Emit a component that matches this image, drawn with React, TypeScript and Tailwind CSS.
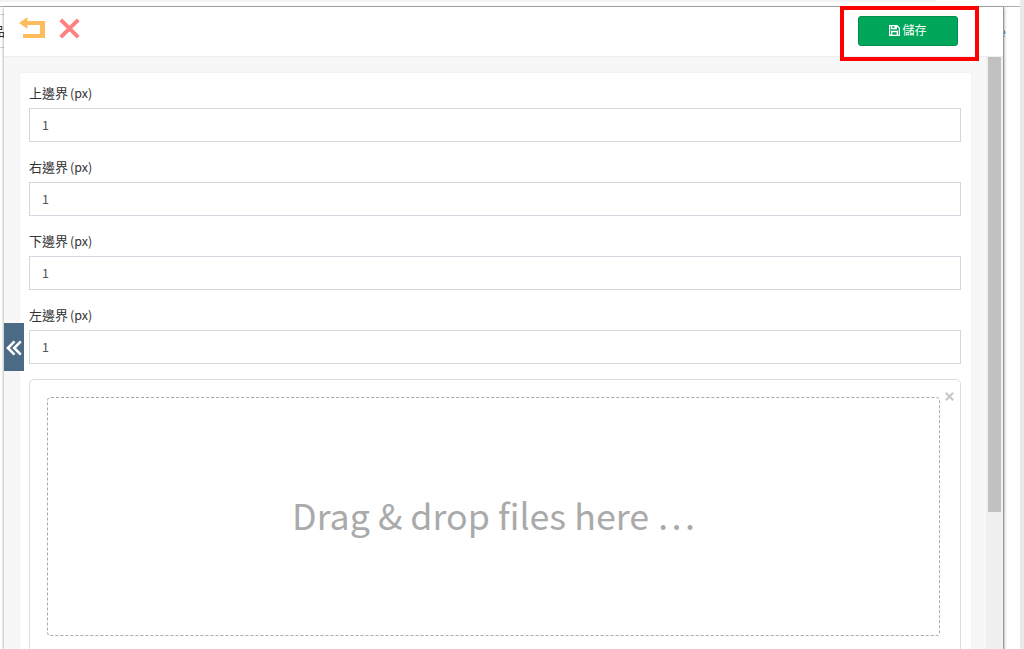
import React from "react";

const fields = [
  { id: "top", label: "上邊界", value: "1" },
  { id: "right", label: "右邊界", value: "1" },
  { id: "bottom", label: "下邊界", value: "1" },
  { id: "left", label: "左邊界", value: "1" },
];

const BackIcon = () => (
  <svg width="26" height="22" viewBox="0 0 26 22" fill="#fdbd5c">
    <path d="M0 6 8.500 0v4H26v17H4v-4h17V8H8.500v4z" />
  </svg>
);

const CancelIcon = () => (
  <svg width="21" height="21" viewBox="0 0 21 21" stroke="#ff8080" strokeWidth="4">
    <path d="M1.800 1.800 19.200 19.200M19.200 1.800 1.800 19.200" />
  </svg>
);

const SaveIcon = () => (
  <svg width="11" height="11" viewBox="0 0 11 11" fill="none" stroke="#fff" strokeWidth="1.3">
    <path d="M.6.6h7.300l2.500 2.500v7.300H.6z" />
    <path d="M2.700.5v3.200h4.600V.5M2.700 10.500v-4h5.600v4M6 1v2.500" />
  </svg>
);

const Header = () => (
  <header className="flex h-[50px] shrink-0 items-start border-b border-[#eeeeee] bg-white">
    <button className="mt-[10px] ml-[15px]">
      <BackIcon />
    </button>
    <button className="mt-[11px] ml-[14px]">
      <CancelIcon />
    </button>
    <div className="z-10 -mt-[1px] mr-[24px] ml-auto h-[55px] w-[139px] shrink-0 border-4 border-[#ff0000] pt-[6px] pl-[14px]">
      <button className="flex h-[30px] w-[100px] items-center justify-center gap-[2px] rounded-[3px] border border-[#008d4c] bg-[#00a65a] pb-px text-[12px] text-white">
        <SaveIcon />
        <span className="-mt-px">儲存</span>
      </button>
    </div>
  </header>
);

const Dropzone = () => (
  <div className="relative h-[300px] rounded-[5px] border border-[#dddddd] p-[17px] pr-[20px]">
    <div className="flex h-[239px] items-center justify-center rounded-[4px] border border-dashed border-[#aaaaaa] pb-[4px] text-[35.8px] text-[#aaaaaa]">
      <span>Drag &amp; drop files here …</span>
    </div>
    <button className="absolute top-[12px] right-[6px]">
      <svg width="9" height="9" viewBox="0 0 9 9" stroke="#c8c8c8" strokeWidth="2.2">
        <path d="M.8.8l7.400 7.400M8.200.8.8 8.200" />
      </svg>
    </button>
  </div>
);

const App = () => {
  return (
    <div className="flex h-[649px] w-[1024px] flex-col overflow-hidden bg-white font-['Noto_Sans_CJK_TC',sans-serif]">
      <div className="h-[6px] shrink-0">
        <div className="h-[2px] w-[936px] rounded-br-[2px] bg-[#f3f3f3]"></div>
      </div>
      <div className="flex min-h-0 flex-1">
        <div className="flex w-[1020px] border-t border-[#adadad]">
          {/* Page behind the panel */}
          <div className="flex w-[4px] shrink-0 justify-end overflow-hidden">
            <div className="mt-[7px] h-[34px] w-full border-y border-[#d2d6de] text-[13px] leading-[32px] text-[#333333]">
              <span className="-ml-[8px] block w-[13px]">品</span>
            </div>
          </div>

          <div className="relative flex w-[1000px] shrink-0 flex-col border-r border-[#999999] bg-white shadow-[0_1px_3px_rgba(0,0,0,0.45)]">
            <Header />
            <div className="flex min-h-0 flex-1">
              <div className="flex-1 overflow-hidden bg-[#f7f7f7] px-[15px] pt-[15px]">
                <div className="-mr-px rounded-[3px] border border-[#f3f3f3] bg-white pr-[10px] pl-[9px] pt-[10px]">
                  {fields.map(({ id, label, value }) => (
                    <div key={id} className="mb-[15px]">
                      <label
                        htmlFor={id}
                        className="block h-[25px] text-[13px] leading-[20px] text-[#333333]"
                      >
                        {label} <span className="-ml-px text-[12.5px]">(px)</span>
                      </label>
                      <input
                        id={id}
                        defaultValue={value}
                        className="block h-[34px] w-full border border-[#d2d6de] px-[12px] pb-[2px] text-[12.5px] text-[#555555]"
                      />
                    </div>
                  ))}
                  <Dropzone />
                </div>
              </div>
              {/* Scrollbar */}
              <div className="w-[17px] bg-[#f0f0f0] px-[2px]">
                <div className="h-[455px] bg-[#c1c1c1]"></div>
              </div>
            </div>

            <button className="absolute top-[316px] left-0 flex h-[48px] w-[20px] items-center justify-center bg-[#4b6a86] pt-px">
              <svg width="16" height="16" viewBox="0 0 16 16" fill="none" stroke="#fff" strokeWidth="2.6">
                <path d="M8.500 1.300 1.900 8l6.600 6.700M14.800 1.300 8.200 8l6.600 6.700" />
              </svg>
            </button>
          </div>

          <div className="mt-[16px] w-[2px] overflow-hidden text-[12px] text-[#3c78b4]">
            <span className="-ml-[5px] block">e</span>
          </div>
        </div>
        <div className="-mt-[6px] w-[4px] bg-[#e9e9e9]"></div>
      </div>
    </div>
  );
};

export default App;
